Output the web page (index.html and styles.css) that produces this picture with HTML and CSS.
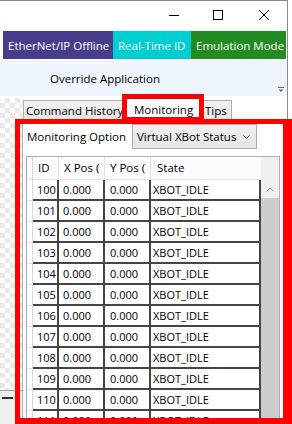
FILE: index.html
```html
<!DOCTYPE html>
<html>
<head>
<meta charset="utf-8">
<link rel="stylesheet" href="styles.css">
</head>
<body>
<div class="window">
  <div class="titlebar">
    <span class="capbtn cap-min"><svg width="10" height="10" viewBox="0 0 10 10"><path d="M0 5.5H10" stroke="#000" stroke-width="1"/></svg></span>
    <span class="capbtn"><svg width="10" height="10" viewBox="0 0 10 10"><rect x="0.5" y="0.5" width="9" height="9" fill="none" stroke="#000"/></svg></span>
    <span class="capbtn"><svg width="10" height="10" viewBox="0 0 10 10"><path d="M0 0L10 10M10 0L0 10" stroke="#000" stroke-width="1"/></svg></span>
  </div>
  <div class="badges">
    <span class="badge b-purple">EtherNet/IP Offline</span>
    <span class="badge b-cyan">Real-Time ID</span>
    <span class="badge b-green">Emulation Mode</span>
  </div>
  <div class="ribbon">
    <span class="ribbon-title">Override Application</span>
    <svg class="ribbon-more" width="6" height="6" viewBox="0 0 6 6"><path d="M0 0.5H6" stroke="#6a6a6a"/><path d="M0.5 2.5L3 5L5.5 2.5Z" fill="#6a6a6a"/></svg>
  </div>
  <div class="main">
    <div class="side">
      <div class="checker"></div>
      <div class="side-bottom"><span class="grip"></span></div>
    </div>
    <div class="tabs">
      <div class="tabstrip">
        <span class="tab tab-cmd">Command History</span>
        <span class="tab tab-active">Monitoring</span>
        <span class="tab tab-tips">Tips</span>
      </div>
      <div class="panel">
        <div class="option-row">
          <span class="option-label">Monitoring Option</span>
          <div class="combo"><span>Virtual XBot Status</span><svg width="7" height="4" viewBox="0 0 7 4"><path d="M0.5 0.5L3.5 3.5L6.5 0.5" fill="none" stroke="#606060"/></svg></div>
        </div>
        <div class="grid">
          <div class="table">
            <div class="row head">
              <span class="rh"></span><span class="hc">ID</span><span class="hc">X Pos (</span><span class="hc">Y Pos (</span><span class="hc hc-state">State</span>
            </div>
            <div class="row"><span class="rh"></span><span class="c c-id">100</span><span class="c c-x">0.000</span><span class="c c-y">0.000</span><span class="c c-s">XBOT_IDLE</span></div>
            <div class="row"><span class="rh"></span><span class="c c-id">101</span><span class="c c-x">0.000</span><span class="c c-y">0.000</span><span class="c c-s">XBOT_IDLE</span></div>
            <div class="row"><span class="rh"></span><span class="c c-id">102</span><span class="c c-x">0.000</span><span class="c c-y">0.000</span><span class="c c-s">XBOT_IDLE</span></div>
            <div class="row"><span class="rh"></span><span class="c c-id">103</span><span class="c c-x">0.000</span><span class="c c-y">0.000</span><span class="c c-s">XBOT_IDLE</span></div>
            <div class="row"><span class="rh"></span><span class="c c-id">104</span><span class="c c-x">0.000</span><span class="c c-y">0.000</span><span class="c c-s">XBOT_IDLE</span></div>
            <div class="row"><span class="rh"></span><span class="c c-id">105</span><span class="c c-x">0.000</span><span class="c c-y">0.000</span><span class="c c-s">XBOT_IDLE</span></div>
            <div class="row"><span class="rh"></span><span class="c c-id">106</span><span class="c c-x">0.000</span><span class="c c-y">0.000</span><span class="c c-s">XBOT_IDLE</span></div>
            <div class="row"><span class="rh"></span><span class="c c-id">107</span><span class="c c-x">0.000</span><span class="c c-y">0.000</span><span class="c c-s">XBOT_IDLE</span></div>
            <div class="row"><span class="rh"></span><span class="c c-id">108</span><span class="c c-x">0.000</span><span class="c c-y">0.000</span><span class="c c-s">XBOT_IDLE</span></div>
            <div class="row"><span class="rh"></span><span class="c c-id">109</span><span class="c c-x">0.000</span><span class="c c-y">0.000</span><span class="c c-s">XBOT_IDLE</span></div>
            <div class="row"><span class="rh"></span><span class="c c-id">110</span><span class="c c-x">0.000</span><span class="c c-y">0.000</span><span class="c c-s">XBOT_IDLE</span></div>
            <div class="row"><span class="rh"></span><span class="c c-id">111</span><span class="c c-x">0.000</span><span class="c c-y">0.000</span><span class="c c-s">XBOT_IDLE</span></div>
          </div>
          <div class="vscroll">
            <div class="vs-top"><svg width="8" height="5" viewBox="0 0 8 5"><path d="M0.5 4.5L4 1L7.5 4.5" stroke="#a6a6a6" fill="none"/></svg></div>
            <div class="vs-thumb"></div>
          </div>
        </div>
      </div>
    </div>
  </div>
</div>
<div class="mark mark-tab"></div>
<div class="mark mark-panel"></div>
</body>
</html>
```
FILE: styles.css
```css
html, body {
  margin: 0;
  padding: 0;
}
body {
  width: 292px;
  height: 424px;
  overflow: hidden;
  position: relative;
  background: #fff;
  font-family: "Open Sans", "Noto Sans", sans-serif;
  font-size: 11.5px;
  color: #000;
}
.window {
  width: 287px;
  height: 423px;
  border-top: 1px solid #8a8a8a;
  border-right: 1px solid #8a8a8a;
  display: flex;
  flex-direction: column;
  overflow: hidden;
}
.titlebar {
  height: 30px;
  flex: none;
  display: flex;
  justify-content: flex-end;
  align-items: center;
  padding-bottom: 2px;
  box-sizing: border-box;
}
.capbtn {
  width: 46px;
  display: flex;
  justify-content: center;
}
.cap-min { padding-left: 4px; width: 42px; }
.badges {
  height: 28px;
  flex: none;
  display: flex;
  margin-left: 3px;
}
.badge {
  display: flex;
  align-items: center;
  padding: 0 5px;
  box-sizing: border-box;
  color: #fff;
  white-space: nowrap;
}
.b-purple { width: 110px; background: #483d8b; }
.b-cyan { width: 78px; background: #00ced1; }
.b-green { width: 95px; background: #228b22; }
.ribbon {
  margin-top: 1px;
  height: 36px;
  flex: none;
  background: #eef5fc;
  display: flex;
  align-items: center;
  padding-left: 50px;
  padding-right: 3px;
}
.ribbon-more {
  margin-left: auto;
  align-self: flex-end;
  margin-bottom: 3px;
}
.main {
  flex: 1;
  min-height: 0;
  display: flex;
}
.side {
  width: 22px;
  flex: none;
  display: flex;
  flex-direction: column;
}
.checker {
  margin-top: 2px;
  height: 292px;
  background: conic-gradient(#e9e9e9 25%, #fff 0 50%, #e9e9e9 0 75%, #fff 0) 0 0 / 10px 10px;
}
.side-bottom {
  flex: 1;
  border-top: 1px solid #a0a0a0;
  background: #f0f0f0;
}
.grip {
  display: block;
  margin: 6px 0 0 2px;
  width: 11px;
  height: 2px;
  background: #333;
}
.tabs {
  flex: 1;
  min-width: 0;
  display: flex;
  flex-direction: column;
}
.tabstrip {
  height: 24px;
  flex: none;
  display: flex;
  align-items: flex-start;
  padding: 4px 0 0 1px;
  box-sizing: border-box;
}
.tab {
  height: 20px;
  box-sizing: border-box;
  display: flex;
  align-items: center;
  padding: 0 0 0 2px;
  border: 1px solid #acacac;
  border-bottom: none;
  background: linear-gradient(#f3f3f3, #e8e8e8);
  white-space: nowrap;
  overflow: hidden;
  flex: none;
}
.tab-cmd { width: 101px; }
.tab-active {
  margin-top: -2px;
  height: 22px;
  width: 76px;
  padding-left: 9px;
  background: #fff;
}
.tab-tips { width: 32px; padding-left: 4px; }
.panel {
  flex: 1;
  min-height: 0;
  border: 1px solid #acacac;
  padding: 3px 0 0 3px;
  display: flex;
  flex-direction: column;
  overflow: hidden;
}
.option-row {
  height: 25px;
  flex: none;
  display: flex;
  align-items: center;
}
.option-label { margin-left: 1px; width: 105px; flex: none; white-space: nowrap; }
.combo {
  width: 125px;
  height: 25px;
  box-sizing: border-box;
  border: 1px solid #acacac;
  background: linear-gradient(#f0f0f0, #e5e5e5);
  display: flex;
  align-items: center;
  padding: 0 6px 0 4px;
  justify-content: space-between;
}
.grid {
  margin-top: 7px;
  width: 254px;
  flex: 1;
  min-height: 0;
  box-sizing: border-box;
  border: 1px solid #9fb2c6;
  display: flex;
  overflow: hidden;
}
.table {
  width: 234px;
  flex: none;
}
.row {
  display: grid;
  grid-template-columns: 6px 26px 46px 46px 110px;
  height: 21px;
}
.row > span {
  box-sizing: border-box;
  white-space: nowrap;
  overflow: hidden;
  line-height: 20px;
  font-size: 11px;
}
.rh {
  border-right: 1px solid #d5d9de;
  border-bottom: 1px solid #e3e3e3;
}
.c {
  border-right: 2px solid #454545;
  border-bottom: 2px solid #454545;
}
.c-id { padding-left: 4px; }
.c-x { padding-left: 4px; }
.c-y { padding-left: 5px; }
.c-s { padding-left: 2px; }
.head {
  height: 23px;
  background: #fcfcfc;
}
.row.head > span {
  line-height: 22px;
  font-size: 11.5px;
}
.hc {
  border-right: 1px solid #e3e3e3;
  border-bottom: 1px solid #e3e3e3;
  padding-left: 5px;
}
.hc-state { padding-left: 6px; border-right: none; }
.vscroll {
  flex: 1;
  display: flex;
  flex-direction: column;
}
.vs-top {
  height: 41px;
  background: #f0f0f0;
  display: flex;
  align-items: flex-end;
  justify-content: center;
  padding-bottom: 6px;
  box-sizing: border-box;
}
.vs-thumb {
  flex: 1;
  background: #cdcdcd;
}
.mark {
  position: absolute;
  box-sizing: border-box;
  border: 5px solid #ff0000;
  pointer-events: none;
}
.mark-tab {
  left: 122px;
  top: 94px;
  width: 82px;
  height: 26px;
  border-bottom-width: 3px;
}
.mark-panel {
  left: 15px;
  top: 119px;
  width: 277px;
  height: 305px;
  border-right-width: 9px;
  border-bottom-width: 6px;
}
```
